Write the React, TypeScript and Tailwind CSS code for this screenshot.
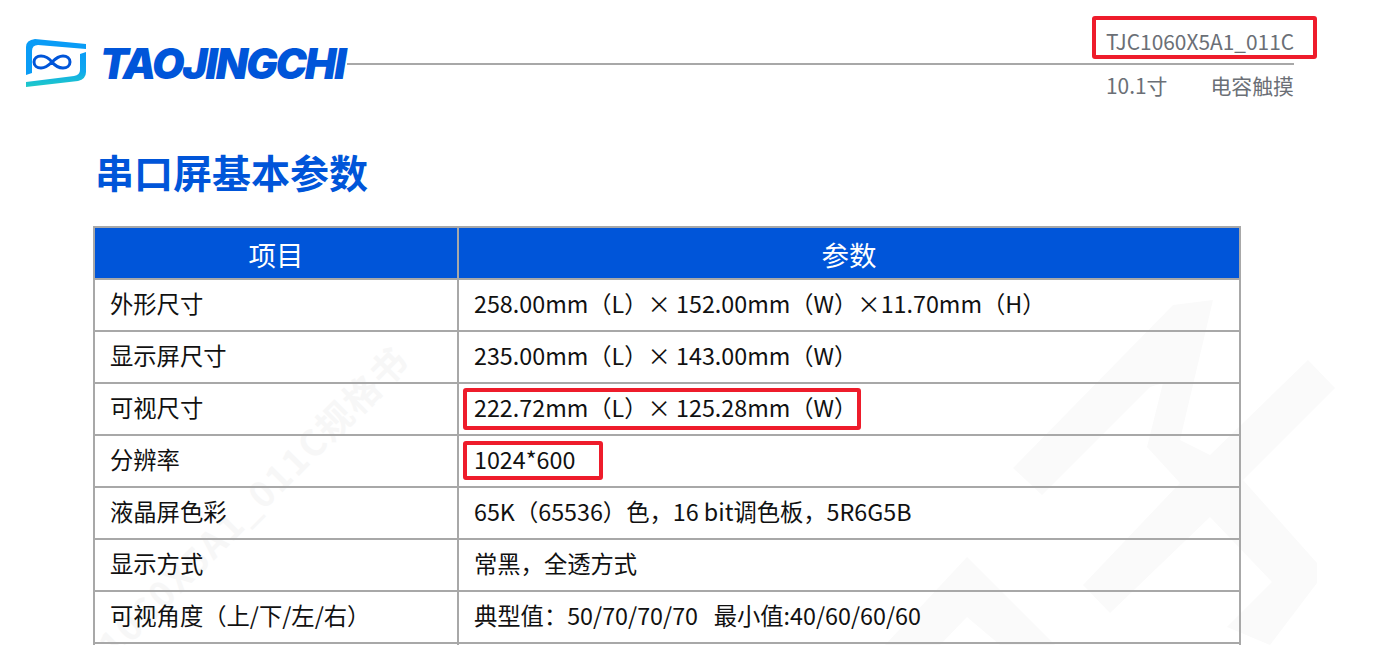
const ROWS: { label: string; value: string; box?: string }[] = [
  { label: "外形尺寸", value: "258.00mm（L）× 152.00mm（W）×11.70mm（H）" },
  { label: "显示屏尺寸", value: "235.00mm（L）× 143.00mm（W）" },
  { label: "可视尺寸", value: "222.72mm（L）× 125.28mm（W）", box: "w-[398px] h-[42px] top-[4px]" },
  { label: "分辨率", value: "1024*600", box: "w-[140px] h-[39px] top-[5px]" },
  { label: "液晶屏色彩", value: "65K（65536）色，16 bit调色板，5R6G5B" },
  { label: "显示方式", value: "常黑，全透方式" },
  { label: "可视角度（上/下/左/右）", value: "典型值：50/70/70/70   最小值:40/60/60/60" },
  { label: "", value: "" },
];

function Logo() {
  return (
    <svg width="62" height="50" viewBox="0 0 62 50" className="shrink-0">
      <defs>
        <linearGradient id="frame" x1="0" y1="0" x2="0" y2="1">
          <stop offset="0" stopColor="#0a9cf6" />
          <stop offset="0.55" stopColor="#0fa8ee" />
          <stop offset="1" stopColor="#1fcbc6" />
        </linearGradient>
      </defs>
      <path
        d="M0 9 Q0 2 9 1 L60 6 L60 11 L12 7 Q6 7 6 13 L6 35 L0 37 Z"
        fill="#0a9cf6"
      />
      <path
        d="M60 14 L60 34 Q60 41 52 43 L0 49 L0 44 L48 38 Q54 37 54 32 L54 16 Z"
        fill="url(#frame)"
      />
      <path
        d="M26 24 C22 19 19 18 15 18 C11 18 8 20.5 8 24 C8 27.5 11 30 15 30 C20 30 24 26 26 24 C29 21 32 18 37 18 C41 18 44 20.5 44 24 C44 27.5 41 30 37 30 C33 30 30 29 26 24 Z"
        fill="none"
        stroke="#0055d9"
        strokeWidth="3"
      />
    </svg>
  );
}

function Watermark() {
  return (
    <div className="absolute inset-0 overflow-hidden pointer-events-none">
      <svg width="1377" height="645" viewBox="0 0 1377 645" className="absolute inset-0">
        <g fill="#fafafa">
          <path d="M1213 300 L1173 305 L1013 468 L1042 495 L1150 387 L1163 383 L1147 447 L1180 483 L1083 585 L1110 613 L1210 517 L1272 582 L1227 627 L1270 645 L1317 583 L1317 563 L1243 480 L1335 388 L1308 360 L1210 455 L1180 440 Z" />
          <path d="M967 557 L1055 645 L1000 645 L967 617 L940 645 L885 645 Z" />
        </g>
      </svg>
      <div className="absolute left-[103px] top-[622px] w-[400px] origin-left -rotate-45 text-[36px] font-bold tracking-[2px] whitespace-nowrap text-[#f7f7f7]">
        1060X5A1_011C规格书
      </div>
    </div>
  );
}

export default function App() {
  return (
    <div
      className="relative h-[645px] overflow-hidden bg-white"
      style={{ fontFamily: '"Noto Sans CJK SC", "Noto Sans", sans-serif' }}
    >
      <Watermark />

      {/* --- HEADER --- */}
      <header className="relative flex h-[106px] items-start pl-[26px] pr-[83px] pt-[38px]">
        <Logo />
        <span
          className="ml-[12px] mt-[2px] text-[42px] leading-[48px] font-black italic tracking-[-2.1px] text-[#0055d9] whitespace-nowrap"
          style={{ fontFamily: "Inter, sans-serif" }}
        >
          TAOJINGCHI
        </span>
        <div className="ml-[3px] mt-[25px] h-[2px] flex-1 bg-[#a8a8a8]" />
        <div className="absolute right-[83px] top-[27px] w-[188px] text-[20.9px] leading-[28px] text-[#6b6f76]">
          <div className="relative whitespace-nowrap">
            TJC1060X5A1_011C
            <span className="absolute -left-[14px] -top-[11px] h-[43px] w-[225px] rounded-[3px] border-[4px] border-[#ee1c2b]" />
          </div>
          <div className="mt-[16px] flex justify-between">
            <span>10.1寸</span>
            <span>电容触摸</span>
          </div>
        </div>
      </header>

      {/* --- TITLE --- */}
      <h1 className="relative ml-[95px] mt-[37px] text-[39px] leading-[56px] font-bold text-[#0055d9]">
        串口屏基本参数
      </h1>

      {/* --- TABLE --- */}
      <table className="relative ml-[93px] mt-[27px] w-[1148px] table-fixed border-collapse text-[23.3px] text-[#111]">
        <colgroup>
          <col className="w-[364px]" />
          <col />
        </colgroup>
        <thead>
          <tr className="h-[52px] bg-[#0055d9] text-[27.5px] font-normal text-white">
            <th className="border-2 border-[#a8a8a8] pt-[3px] font-normal">项目</th>
            <th className="border-2 border-[#a8a8a8] pt-[3px] font-normal">参数</th>
          </tr>
        </thead>
        <tbody>
          {ROWS.map((row, i) => (
            <tr key={i} className="h-[52px]">
              <td className="border-2 border-[#a8a8a8] pb-[4px] pl-[15px] whitespace-nowrap">{row.label}</td>
              <td className="relative border-2 border-[#a8a8a8] pb-[4px] pl-[15px] whitespace-pre">
                {row.value}
                {row.box && (
                  <span className={`absolute left-[4px] rounded-[3px] border-[4px] border-[#ee1c2b] ${row.box}`} />
                )}
              </td>
            </tr>
          ))}
        </tbody>
      </table>
    </div>
  );
}
